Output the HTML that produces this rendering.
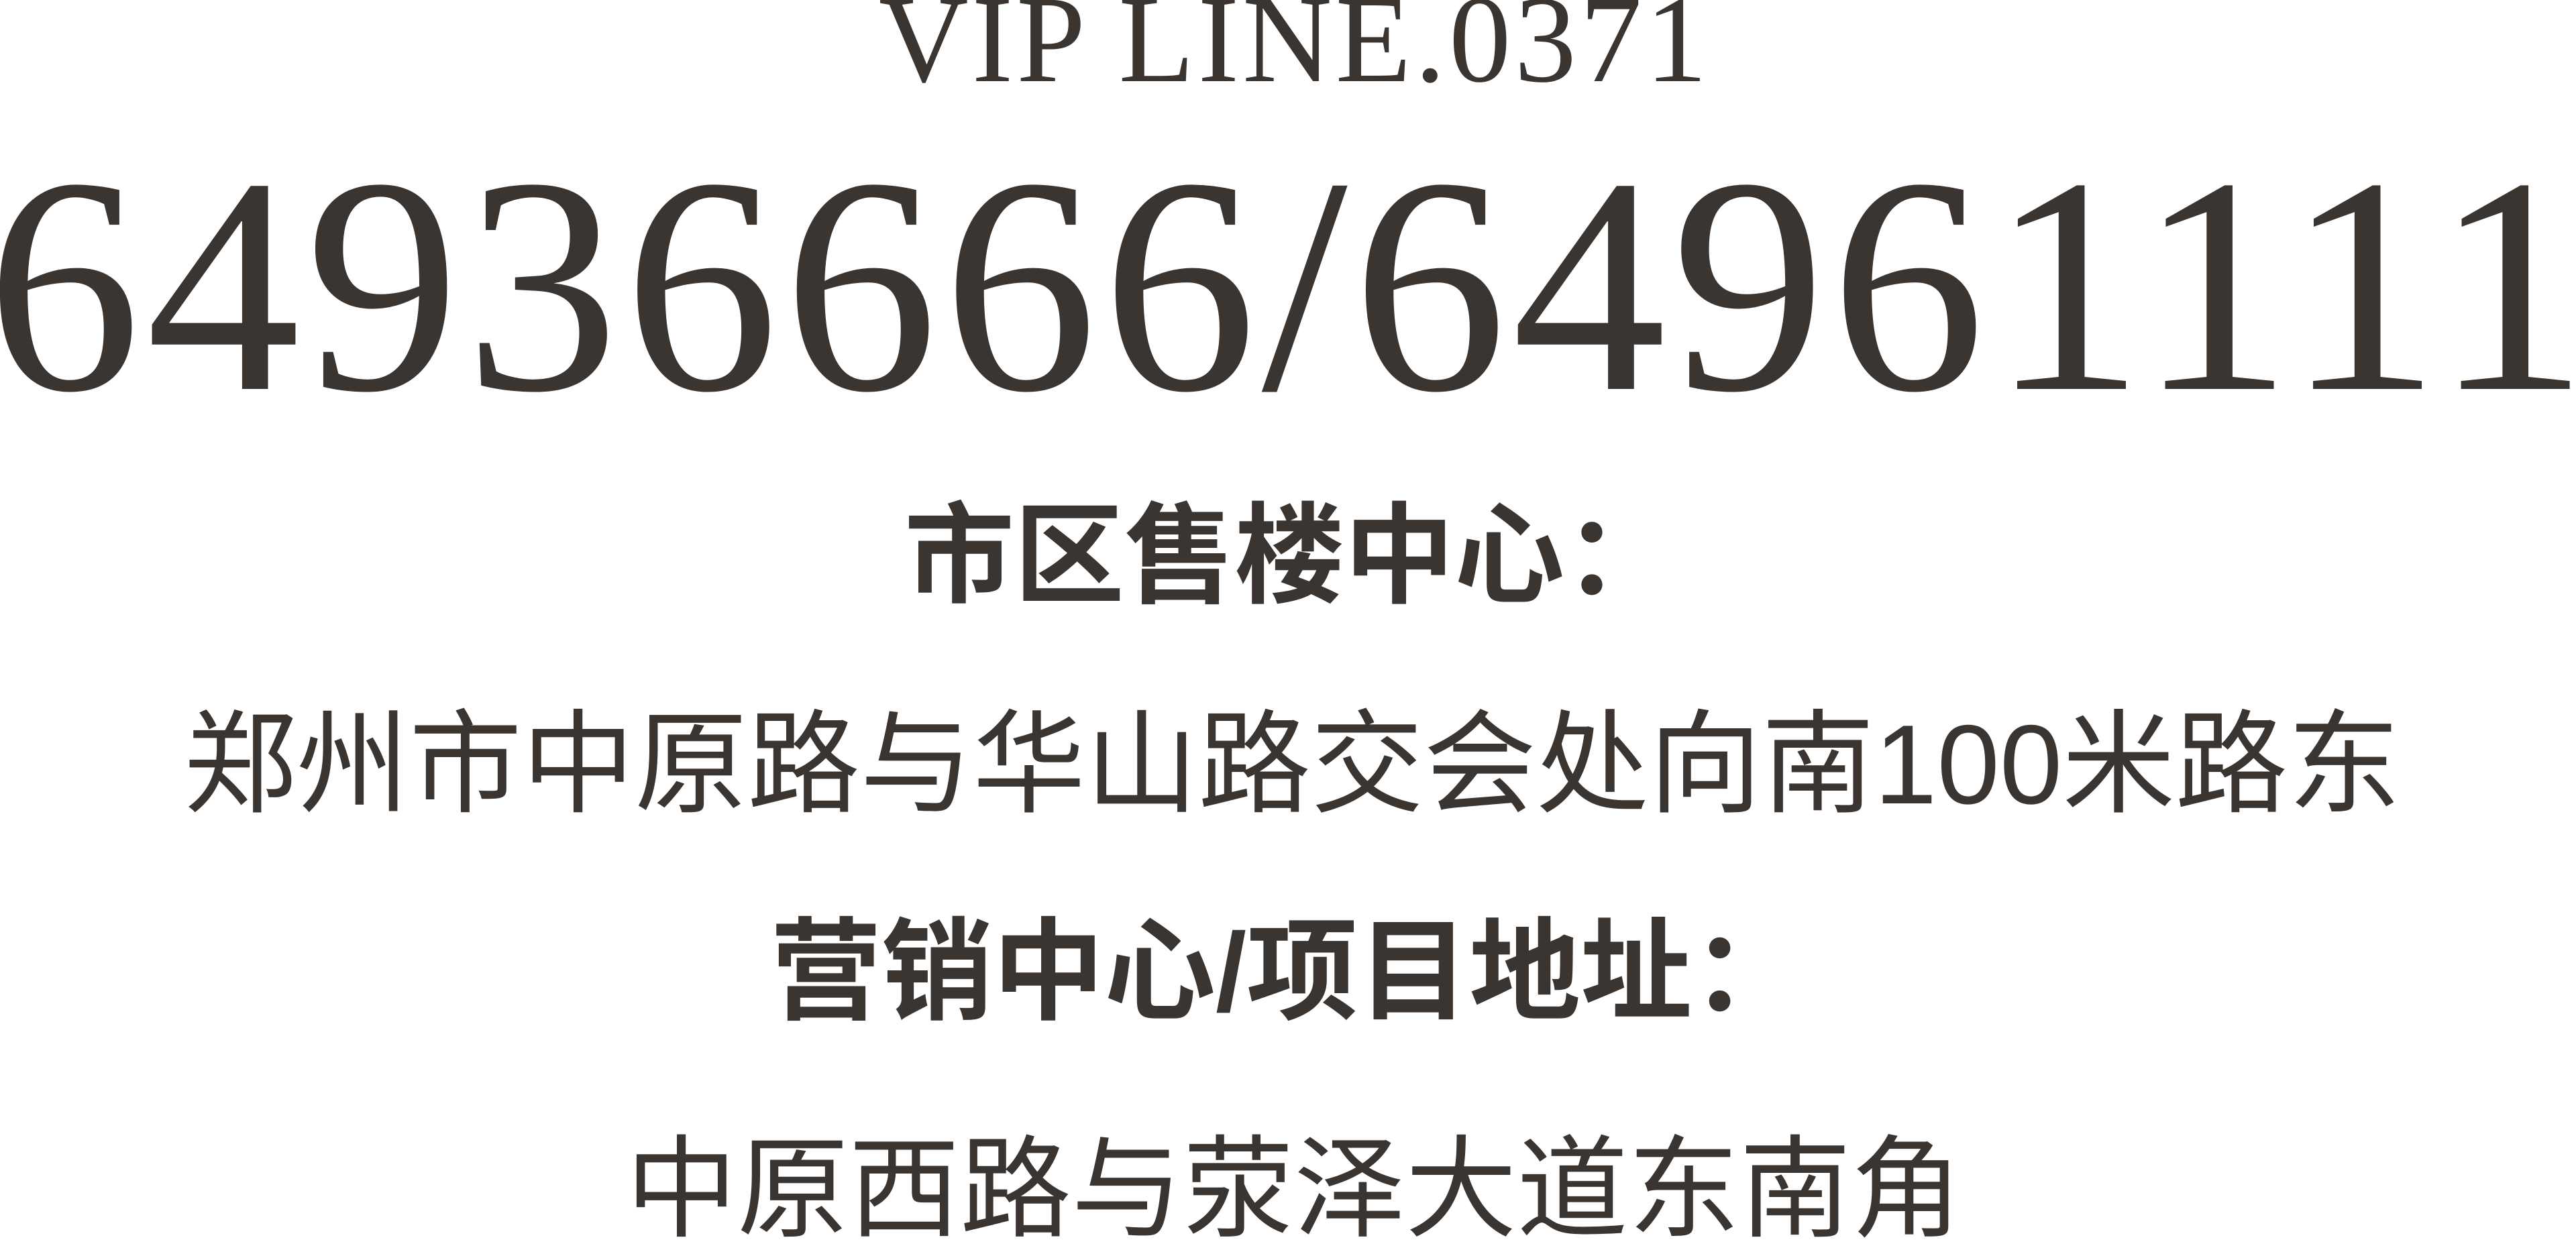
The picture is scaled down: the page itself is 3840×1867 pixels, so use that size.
<!DOCTYPE html>
<html><head><meta charset="utf-8"><style>
html,body{margin:0;padding:0;}
body{width:3840px;height:1838px;background:#fff;position:relative;overflow:hidden;color:#3b3531;}
.t{position:absolute;white-space:nowrap;line-height:1;}
.serif{font-family:"Liberation Serif",serif;}
.cjk{font-family:"Liberation Sans","Noto Sans CJK SC",sans-serif;}
</style></head><body>
<div class="t serif" style="left:1310px;top:-33px;font-size:185px;letter-spacing:5px;">VIP LINE.0371</div>
<div class="t serif" style="left:-20px;top:195px;font-size:460px;letter-spacing:7.6px;">64936666/64961111</div>
<div class="t cjk" style="left:1348px;top:748px;font-size:164px;font-weight:bold;">市区售楼中心：</div>
<div class="t cjk" style="left:274px;top:1056px;font-size:168px;">郑州市中原路与华山路交会处向南100米路东</div>
<div class="t cjk" style="left:1148px;top:1368px;font-size:166px;font-weight:bold;">营销中心/项目地址：</div>
<div class="t cjk" style="left:933px;top:1692px;font-size:166px;">中原西路与荥泽大道东南角</div>
</body></html>
